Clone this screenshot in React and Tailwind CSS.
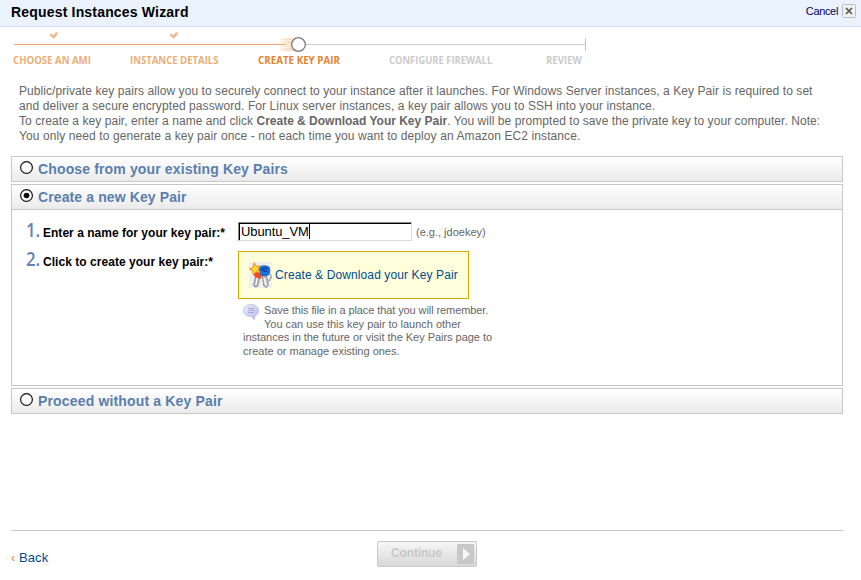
function Check() {
  return (
    <svg width="8" height="8" viewBox="0 0 8 8" className="block">
      <path d="M0 1.600 L1.400 1.400 L3 3.400 L5.800 0.600 L7.600 0.200 V2.600 L3.600 6.800 L0.200 3.800 Z" fill="#f0b78a" />
    </svg>
  );
}

function Track() {
  return (
    <svg width="576" height="19" viewBox="0 0 576 19" className="block">
      <defs>
        <linearGradient id="trail" gradientUnits="userSpaceOnUse" x1="263" x2="284" y1="0" y2="0">
          <stop offset="0" stopColor="#f6c48f" stopOpacity="0.05" />
          <stop offset="1" stopColor="#f2b87e" stopOpacity="0.7" />
        </linearGradient>
      </defs>
      <path d="M267 1h16v13h-16z" fill="url(#trail)" opacity="0.7" />
      <path d="M268 2h14v1h-14zM266 4h14v1h-14zM264 6h16v1h-16zM262 9h18v1h-18zM267 11h15v1h-15zM270 13h14v1h-14z" fill="url(#trail)" opacity="0.7" />
      <path d="M1 7.500H272" stroke="#eba869" />
      <path d="M291 7.500H572" stroke="#ccc" />
      <path d="M572.500 1V14" stroke="#c4c4c4" />
      <circle cx="285.500" cy="7.500" r="6.800" fill="#fff" stroke="#7c7c7c" strokeWidth="1.300" />
    </svg>
  );
}

function Radio({ checked }) {
  return (
    <svg width="13" height="13" viewBox="0 0 13 13" className="block shrink-0">
      <circle cx="6.500" cy="6.500" r="5.900" fill="#fff" stroke="#111" strokeWidth="1.200" />
      {checked && <circle cx="6.500" cy="6.500" r="2.800" fill="#000" />}
    </svg>
  );
}

function KeysIcon() {
  return (
    <svg width="23" height="26" viewBox="0 0 23 26" className="block shrink-0">
      <path d="M0 0h23v26H0z" fill="#efefef" />
      <path d="M18 11.500q5 .5 3.800 4.500q-.8 2.500-3 3" fill="none" stroke="#7c7c7c" strokeWidth="1.200" strokeDasharray="2 .7" />
      <path d="M6.500 14l4 1-.7 5-1.300 4.500-2.500 .5-1.500-1.500 .6-3z" fill="#b5b5b5" stroke="#808080" strokeWidth=".8" />
      <path d="M13 14l4-.5 2 5 .2 5-1.700 2-2.700-1.500-.6-4z" fill="#c4c4c4" stroke="#808080" strokeWidth=".8" />
      <path d="M8.300 16l-1.600 7M15 16l2 7" stroke="#fff" strokeWidth="1.200" />
      <path d="M4 9l7-1 2 5-1.500 4-6-2.500z" fill="#f24a20" />
      <path d="M10.500 4.500q4-1.800 8-.8 3 .8 2.700 5.300 0 3.500-3 5-4 1-6.700-1-3.300-4-1-8.500z" fill="#1c6edb" />
      <path d="M18.500 6.500q-5-1-5.500 1 .5 1.500 5 1.800" stroke="#0b3d94" strokeWidth="1.400" fill="none" />
      <path d="M5.300 .8l1.800 3.500 4-.3-2 3.400 2 3.200-4-.7L4.300 12.800l-.6-4L.5 7l3.400-1.700z" fill="#ffd52e" stroke="#fb8518" strokeWidth="1" />
    </svg>
  );
}

function BubbleIcon() {
  return (
    <svg width="17" height="17" viewBox="0 0 17 17" className="block">
      <defs>
        <linearGradient id="bubble" x1="0" x2="1" y1="0" y2="1">
          <stop offset="0" stopColor="#f0f0fe" />
          <stop offset="1" stopColor="#b4b4ea" />
        </linearGradient>
      </defs>
      <path d="M8 .600C12.500.600 15.800 3.200 15.800 6.500c0 2.600-1.600 4.500-4 5.500l-.3 3.700-3.600-3.300C3.500 12.500 .5 9.900.5 6.500S3.500.600 8 .600z" fill="url(#bubble)" stroke="#bcbce2" strokeWidth=".8" />
      <path d="M5 4.500h6M5 6.500h6M5 8.500h6" stroke="#a8a8e0" strokeWidth="1" />
    </svg>
  );
}

function SectionHeader({ title, checked, spacing }) {
  return (
    <div className="flex h-6 items-start bg-gradient-to-b from-white to-[#ebebeb] pl-2">
      <div className="pt-1"><Radio checked={checked} /></div>
      <h2 className={`ml-[5px] pt-1 text-[14px] leading-4 font-bold whitespace-nowrap text-[#5a7fae] ${spacing}`}>{title}</h2>
    </div>
  );
}

function StepNumber({ children }) {
  return (
    <span className="w-[17px] font-['Open_Sans',sans-serif] text-[20px] leading-[16px] font-semibold whitespace-nowrap text-[#6485b2]">
      <span className="inline-block origin-left scale-x-[0.84]">{children}</span>
    </span>
  );
}

const STEPS = [
  { name: "CHOOSE AN AMI", box: "w-[117px] text-[#eaae76]", scale: "scale-x-[0.875]" },
  { name: "INSTANCE DETAILS", box: "w-[128px] text-[#eaae76]", scale: "scale-x-[0.87]" },
  { name: "CREATE KEY PAIR", box: "w-[131px] text-[#e8822a]", scale: "scale-x-[0.89]" },
  { name: "CONFIGURE FIREWALL", box: "w-[157px] text-[#cbcbcb]", scale: "scale-x-[0.855]" },
  { name: "REVIEW", box: "w-[40px] text-[#cbcbcb]", scale: "scale-x-[0.875]" },
];

export default function App() {
  return (
    <div className="h-[580px] w-[861px] overflow-hidden bg-white font-['Liberation_Sans',Arial,sans-serif] text-[12px]">
      <header className="flex h-[27px] items-start justify-between border-b border-[#c6dff5] bg-[#eaf2fe] pr-[5px] pl-[11px]">
        <h1 className="pt-[4px] text-[14px] leading-4 font-bold tracking-[0.18px] text-black">Request Instances Wizard</h1>
        <div className="flex items-start gap-1 pt-1">
          <span className="text-[11px] leading-[15px] tracking-[-0.35px] text-[#000066]">Cancel</span>
          <svg width="14" height="14" viewBox="0 0 14 14" className="block">
            <rect x=".5" y=".5" width="13" height="13" rx="1" fill="#f1f1f1" stroke="#bdbdbd" />
            <path d="M4 4l6 6M10 4l-6 6" stroke="#555" strokeWidth="1.700" />
          </svg>
        </div>
      </header>

      <nav className="h-[57px] pt-[5px] pl-[13px]">
        <div className="flex h-[5px] pl-[36.500px]">
          <div className="w-[120px]"><Check /></div>
          <Check />
        </div>
        <Track />
        <div className="-mt-[4px] flex font-['Open_Sans',sans-serif] text-[11px] leading-[15px] font-bold whitespace-nowrap">
          {STEPS.map((s) => (
            <div key={s.name} className={s.box}>
              <span className={`inline-block origin-left ${s.scale}`}>{s.name}</span>
            </div>
          ))}
        </div>
      </nav>

      <main className="pl-[11px]">
        <div className="h-[72px] pl-2 text-[12px] leading-[15px] whitespace-nowrap text-[#666]">
          <p className="tracking-[0.07px]">Public/private key pairs allow you to securely connect to your instance after it launches. For Windows Server instances, a Key Pair is required to set</p>
          <p className="tracking-[0.085px]">and deliver a secure encrypted password. For Linux server instances, a key pair allows you to SSH into your instance.</p>
          <p className="tracking-[0.06px]">To create a key pair, enter a name and click <b className="tracking-[-0.01px]">Create &amp; Download Your Key Pair</b>. You will be prompted to save the private key to your computer. Note:</p>
          <p className="tracking-[0.095px]">You only need to generate a key pair once - not each time you want to deploy an Amazon EC2 instance.</p>
        </div>

        <div className="flex w-[832px] flex-col gap-[2px]">
          <section className="border border-[#c8c8c8]">
            <SectionHeader title="Choose from your existing Key Pairs" spacing="tracking-[0.14px]" />
          </section>

          <section className="h-[202px] border border-[#c8c8c8]">
            <SectionHeader title="Create a new Key Pair" checked spacing="tracking-[0.11px]" />
            <div className="border-t border-[#c8c8c8] pt-3 pl-[14px]">
              <div className="flex h-[29px] items-start">
                <StepNumber>1.</StepNumber>
                <span className="w-[195px] pt-1 text-[12px] leading-[14px] font-bold tracking-[0.02px] text-black">Enter a name for your key pair:*</span>
                <div className="h-[19px] w-[174px] border border-t-[#8a8a88] border-r-[#dcdad5] border-b-[#dcdad5] border-l-[#8a8a88]">
                  <div className="flex h-full items-start border-t border-l border-black bg-white pl-px text-[13px] leading-[15px] tracking-[-0.1px] text-black">
                    Ubuntu_VM<span className="h-[15px] w-px bg-black" />
                  </div>
                </div>
                <span className="ml-1 pt-[3px] text-[11px] leading-[14px] text-[#666]">(e.g., jdoekey)</span>
              </div>
              <div className="flex items-start">
                <StepNumber>2.</StepNumber>
                <span className="w-[195px] pt-1 text-[12px] leading-[14px] font-bold tracking-[0.04px] text-black">Click to create your key pair:*</span>
                <div>
                  <div className="flex h-[48px] w-[231px] items-center border border-[#d9a800] bg-[#ffffdb] pl-[10px] whitespace-nowrap">
                    <KeysIcon />
                    <span className="ml-[3px] text-[12px] leading-[14px] tracking-[0.11px] text-[#004b91]">Create &amp; Download your Key Pair</span>
                  </div>
                  <div className="pt-[5px] pl-[5px] text-[11px] leading-[13.600px] whitespace-nowrap text-[#666]">
                    <div className="flex">
                      <div className="w-[21px]"><BubbleIcon /></div>
                      <div>
                        <p className="tracking-[-0.09px]">Save this file in a place that you will remember.</p>
                        <p className="tracking-[-0.02px]">You can use this key pair to launch other</p>
                      </div>
                    </div>
                    <p className="tracking-[-0.03px]">instances in the future or visit the Key Pairs page to</p>
                    <p>create or manage existing ones.</p>
                  </div>
                </div>
              </div>
            </div>
          </section>

          <section className="border border-[#c8c8c8]">
            <SectionHeader title="Proceed without a Key Pair" spacing="tracking-[0.16px]" />
          </section>
        </div>

        <footer className="mt-[116px] flex w-[832px] items-start border-t border-[#c8c8c8]">
          <a className="flex w-[366px] gap-1 pt-[19px] text-[13px] leading-[15px] tracking-[0.1px] text-[#004b91]">
            <span className="w-1 text-[12px] leading-[16px] tracking-normal text-[#e8822a]">‹</span>Back
          </a>
          <button className="mt-[10px] flex h-[26px] w-[100px] items-start rounded-[2px] border border-[#c8c8c8] bg-gradient-to-b from-[#f6f6f6] to-[#d8d8d8] pt-[2px] pl-[13px] text-[12px] font-bold text-[#c8c8c8]">
            <span className="w-[66px] pt-[2px] text-left leading-[14px] tracking-[-0.15px]">Continue</span>
            <svg width="17" height="20" viewBox="0 0 17 20" className="block shrink-0">
              <path d="M0 0h17v20H0z" fill="#c8c8c8" />
              <path d="M6 4v12l7-6z" fill="#f8f8f8" />
            </svg>
          </button>
        </footer>
      </main>
    </div>
  );
}
